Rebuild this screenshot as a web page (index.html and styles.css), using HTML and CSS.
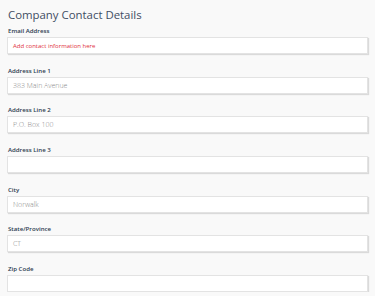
FILE: index.html
```html
<!DOCTYPE html>
<html>
<head>
<meta charset="utf-8">
<link rel="stylesheet" href="styles.css">
</head>
<body>
<div class="page">
  <h1 class="title">Company Contact Details</h1>
  <div class="fields">
    <div class="field">
      <label class="label">Email Address</label>
      <div class="input"><span class="hint">Add contact information here</span></div>
    </div>
    <div class="field">
      <label class="label">Address Line 1</label>
      <div class="input"><span class="value">383 Main Avenue</span></div>
    </div>
    <div class="field">
      <label class="label">Address Line 2</label>
      <div class="input"><span class="value">P.O. Box 100</span></div>
    </div>
    <div class="field">
      <label class="label">Address Line 3</label>
      <div class="input"></div>
    </div>
    <div class="field">
      <label class="label">City</label>
      <div class="input"><span class="value">Norwalk</span></div>
    </div>
    <div class="field">
      <label class="label">State/Province</label>
      <div class="input"><span class="value">CT</span></div>
    </div>
    <div class="field">
      <label class="label">Zip Code</label>
      <div class="input"></div>
    </div>
  </div>
</div>
</body>
</html>
```
FILE: styles.css
```css
html, body {
  margin: 0;
  padding: 0;
  background: #f9f9f9;
}
body {
  font-family: "Open Sans", "Liberation Sans", sans-serif;
}
.page {
  padding: 7px 7px 0 7px;
}
.title {
  margin: 0 0 4px 1px;
  font-size: 11.4px;
  line-height: 16px;
  font-weight: 400;
  color: #3f4d63;
}
.fields {
  display: flex;
  flex-direction: column;
  gap: 12.667px;
}
.field {
  display: flex;
  flex-direction: column;
}
.label {
  display: block;
  font-size: 6.1px;
  line-height: 8px;
  font-weight: 600;
  color: #2b3a4e;
  margin: 0 0 2px 1px;
}
.input {
  box-sizing: border-box;
  height: 17px;
  background: #fff;
  border: 1px solid #e3e3e3;
  box-shadow: 1px 1px 1px rgba(0,0,0,0.12);
  display: flex;
  align-items: center;
  padding: 0 5px;
}
.hint {
  font-size: 6px;
  color: #e0303c;
}
.value {
  font-size: 7px;
  font-weight: 300;
  color: #8a8a8a;
}
```
